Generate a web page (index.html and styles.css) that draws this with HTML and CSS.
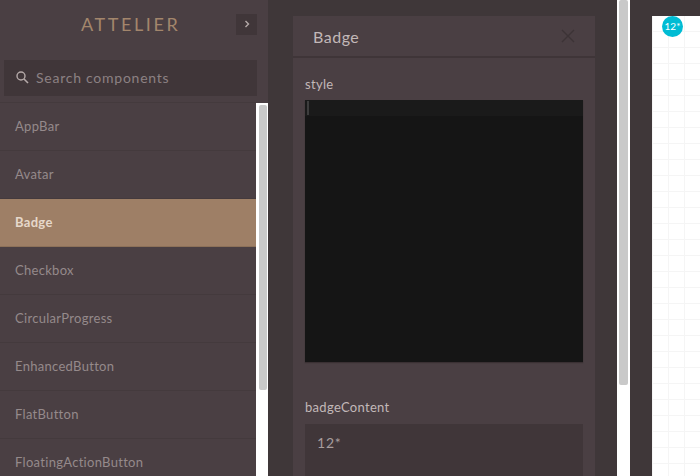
FILE: index.html

```html
<!DOCTYPE html>
<html lang="en">
<head>
  <meta charset="UTF-8" />
  <title>Attelier</title>
  <link rel="stylesheet" href="styles.css">
</head>
<body>
  <div class="app">
    <aside class="sidebar">
      <header class="brand">
        <div class="logo">ATTELIER</div>
        <div class="toggle">
          <svg width="8" height="8" viewBox="0 0 8 8"><path d="M2.5 1 L5.5 4 L2.5 7" fill="none" stroke="#b5aaa9" stroke-width="1.4"/></svg>
        </div>
      </header>
      <div class="search">
        <svg width="14" height="14" viewBox="0 0 14 14"><circle cx="6" cy="6" r="4" fill="none" stroke="#b5aaa9" stroke-width="1.4"/><path d="M9 9 L13 13" stroke="#b5aaa9" stroke-width="1.6"/></svg>
        <span>Search components</span>
      </div>
      <div class="list-wrap">
        <ul class="list">
          <li>AppBar</li>
          <li>Avatar</li>
          <li class="active">Badge</li>
          <li>Checkbox</li>
          <li>CircularProgress</li>
          <li>EnhancedButton</li>
          <li>FlatButton</li>
          <li>FloatingActionButton</li>
        </ul>
        <div class="scrollbar list-scroll"><div class="thumb"></div></div>
      </div>
    </aside>

    <main class="editor">
      <section class="panel">
        <header class="panel-head">
          <h2>Badge</h2>
          <svg width="14" height="14" viewBox="0 0 14 14"><path d="M1 1 L13 13 M13 1 L1 13" stroke="#3c3336" stroke-width="1.4"/></svg>
        </header>
        <div class="panel-body">
          <label>style</label>
          <div class="code"><div class="code-line"><i class="cursor"></i></div></div>
          <label>badgeContent</label>
          <div class="field">12*</div>
        </div>
      </section>
    </main>

    <div class="scrollbar editor-scroll"><div class="thumb"></div></div>

    <div class="stage">
      <div class="canvas">
        <span class="badge">12*</span>
      </div>
    </div>
  </div>
</body>
</html>
```

FILE: styles.css

```css
* {
  box-sizing: border-box;
}
html, body {
  margin: 0;
  height: 100%;
  overflow: hidden;
}
body {
  font-family: Lato, "Liberation Sans", sans-serif;
  background: #3f3739;
  color: #b5aaa9;
}
.app {
  display: flex;
  height: 476px;
}

/* sidebar */
.sidebar {
  width: 268px;
  flex: none;
  display: flex;
  flex-direction: column;
  background: #4a3f43;
}
.brand {
  height: 50px;
  display: flex;
  align-items: center;
  padding: 0 11px 2px 0;
}
.logo {
  flex: 1;
  padding-left: 81px;
  font-size: 18px;
  letter-spacing: 2.6px;
  color: #a3866c;
}
.toggle {
  width: 21px;
  height: 21px;
  background: #403639;
  display: flex;
  align-items: center;
  justify-content: center;
}
.search {
  height: 36px;
  margin: 10px 11px 0 4px;
  padding: 0 0 2px 11px;
  background: #403639;
  display: flex;
  align-items: center;
  gap: 7px;
  font-size: 14px;
  letter-spacing: 0.75px;
  color: #8c8183;
}
.list-wrap {
  flex: 1;
  display: flex;
  margin-top: 6px;
  min-height: 0;
}
.list {
  list-style: none;
  margin: 0;
  padding: 0;
  width: 256px;
  flex: none;
  border-top: 1px solid #443a3d;
}
.list li {
  height: 48px;
  line-height: 46px;
  padding-left: 15px;
  font-size: 13px;
  letter-spacing: 0.3px;
  color: #958a8b;
  border-bottom: 1px solid #443a3d;
}
.list li.active {
  background: #9e7f66;
  color: #e6d8cb;
  font-weight: 700;
  border-bottom-color: #8d7159;
}

/* scrollbars */
.scrollbar {
  background: #fff;
  flex: none;
}
.thumb {
  background: #c9c9c9;
  border-radius: 2px;
}
.list-scroll {
  width: 12px;
  margin-top: 1px;
  padding: 2px 1px 0 3px;
}
.list-scroll .thumb {
  height: 285px;
}
.editor-scroll {
  width: 13px;
  padding: 0 2px;
}
.editor-scroll .thumb {
  height: 385px;
}

/* editor */
.editor {
  width: 349px;
  flex: none;
  padding: 16px 22px 0 25px;
  background: #3f3739;
  overflow: hidden;
}
.panel {
  width: 302px;
  background: #4a3f43;
  height: 500px;
}
.panel-head {
  height: 42px;
  display: flex;
  align-items: center;
  justify-content: space-between;
  padding: 0 20px;
  border-bottom: 2px solid #3f3538;
}
.panel-head h2 {
  margin: 0;
  font-size: 16px;
  font-weight: 400;
  letter-spacing: 0.5px;
  color: #c2b8b8;
}
.panel-body {
  padding: 17px 12px 0;
}
label {
  display: block;
  font-size: 13px;
  letter-spacing: 0.3px;
  line-height: 18px;
  color: #c2b8b8;
}
.code {
  height: 262px;
  margin: 7px 0 36px;
  background: #151515;
  box-shadow: 0 1px 1px #3a3033;
}
.code-line {
  height: 16px;
  background: #1a1a1a;
  padding: 1px 0 0 2px;
}
.cursor {
  display: block;
  width: 2px;
  height: 14px;
  background: #3d3d3d;
}
.field {
  height: 60px;
  margin-top: 8px;
  padding: 10px 12px;
  background: #403639;
  font-size: 14px;
  letter-spacing: 0.8px;
  color: #a89d9d;
}

/* preview */
.stage {
  flex: 1;
  padding: 16px 0 0 22px;
  background: #3f3739;
}
.canvas {
  position: relative;
  height: 460px;
  background-color: #fff;
  background-image:
    linear-gradient(#f5f5f5 1px, transparent 1px),
    linear-gradient(90deg, #f5f5f5 1px, transparent 1px);
  background-size: 16px 16px;
  background-position: 0 15px;
}
.badge {
  position: absolute;
  left: 10px;
  top: 0;
  width: 21px;
  height: 21px;
  border-radius: 50%;
  background: #00bcd4;
  color: #fff;
  font-size: 10px;
  line-height: 21px;
  text-align: center;
}
```
